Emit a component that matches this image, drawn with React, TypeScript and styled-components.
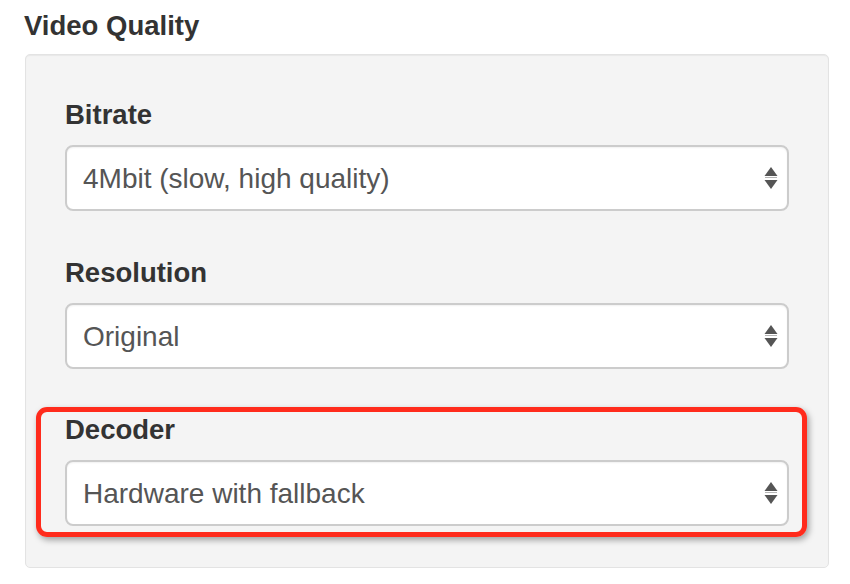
import styled, { createGlobalStyle } from 'styled-components'

const GlobalStyle = createGlobalStyle`
  html, body {
    margin: 0;
    padding: 0;
    background: #ffffff;
  }
  body {
    font-family: 'Liberation Sans', Arial, Helvetica, sans-serif;
    color: #333333;
  }
  * {
    box-sizing: border-box;
  }
`

const Page = styled.div`
  padding: 11px 0 0 24px;
  width: 850px;
`

const Title = styled.h3`
  margin: 0 0 13px 0;
  font-size: 27.5px;
  font-weight: 700;
  line-height: 30px;
  color: #333333;
`

const Well = styled.div`
  display: flex;
  flex-direction: column;
  margin-left: 1px;
  width: 804px;
  padding: 45px 39px 30px 39px;
  background: #f4f4f4;
  border: 1px solid #e3e3e3;
  border-radius: 5px;
  box-shadow: inset 0 1px 1px rgba(0, 0, 0, 0.05);
`

const FormGroup = styled.div`
  display: flex;
  flex-direction: column;
  & + & {
    margin-top: 47px;
  }
`

const Highlight = styled.div`
  display: flex;
  flex-direction: column;
  margin: 38px -18px 0 -29px;
  padding: 3px 13px 6px 24px;
  border: 5px solid #ff2b1c;
  border-radius: 11px;
  box-shadow: 2px 3px 6px rgba(0, 0, 0, 0.35);
`

const Label = styled.label`
  margin-bottom: 15px;
  font-size: 27.5px;
  font-weight: 700;
  line-height: 30px;
  color: #333333;
`

const Select = styled.div`
  display: flex;
  align-items: center;
  justify-content: space-between;
  height: 66px;
  padding: 0 9px 0 16px;
  background: #ffffff;
  border: 2px solid #cccccc;
  border-radius: 8px;
  box-shadow: inset 0 1px 2px rgba(0, 0, 0, 0.06);
  font-size: 28px;
  color: #555555;
`

const Value = styled.span`
  line-height: 30px;
  padding-top: 2px;
`

function Arrows() {
  return (
    <svg width="14" height="26" viewBox="0 0 14 26">
      <polygon points="7,2 13.5,11 0.5,11" fill="#555555" />
      <rect x="1" y="12" width="12" height="1" fill="#b5b5b5" />
      <polygon points="0.5,15 13.5,15 7,24" fill="#555555" />
    </svg>
  )
}

function Field({ label, value }: { label: string; value: string }) {
  return (
    <>
      <Label>{label}</Label>
      <Select>
        <Value>{value}</Value>
        <Arrows />
      </Select>
    </>
  )
}

export default function App() {
  return (
    <Page>
      <GlobalStyle />
      <Title>Video Quality</Title>
      <Well>
        <FormGroup>
          <Field label="Bitrate" value="4Mbit (slow, high quality)" />
        </FormGroup>
        <FormGroup>
          <Field label="Resolution" value="Original" />
        </FormGroup>
        <Highlight>
          <Field label="Decoder" value="Hardware with fallback" />
        </Highlight>
      </Well>
    </Page>
  )
}
